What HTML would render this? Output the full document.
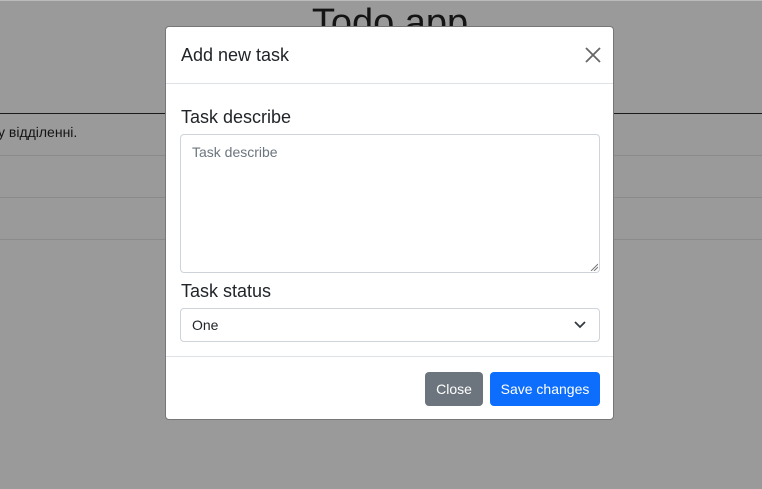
<!DOCTYPE html><html><head><style>
body{margin:0;width:762px;height:489px;overflow:hidden;background:#9a9a9a;font-family:"Liberation Sans",sans-serif;position:relative;color:#111}
.a{position:absolute}
.m{left:165px;top:26px;width:449px;height:394px;background:#fff;border:1px solid #777;border-radius:4px;box-sizing:border-box}
label{position:absolute;font-size:18px;color:#212529}
</style></head><body>
<div class="a" style="left:0;top:0;width:762px;height:1px;background:#bbb"></div>
<div class="a" style="left:0;right:0;top:1px;text-align:center;font-size:38px;color:#141414;line-height:44px;padding-left:18px">Todo app</div>
<div class="a" style="left:0;top:113px;width:762px;height:1px;background:#1a1a1a"></div>
<div class="a" style="left:-2px;top:124px;font-size:14px;color:#141414">у відділенні.</div>
<div class="a" style="left:0;top:155px;width:762px;height:1px;background:#8a8a8a"></div>
<div class="a" style="left:0;top:197px;width:762px;height:1px;background:#8a8a8a"></div>
<div class="a" style="left:0;top:239px;width:762px;height:1px;background:#8a8a8a"></div>
<div class="a m">
 <div class="a" style="left:15px;top:18px;font-size:18px;color:#212529">Add new task</div>
 <svg class="a" style="left:419px;top:20px" width="16" height="16" viewBox="0 0 16 16"><path d="M1 1L15 15M15 1L1 15" stroke="#666" stroke-width="1.8"/></svg>
 <div class="a" style="left:0;top:56px;width:100%;height:1px;background:#dee2e6"></div>
 <label style="left:15px;top:80px">Task describe</label>
 <div class="a" style="left:14px;top:107px;width:420px;height:139px;border:1px solid #ced4da;border-radius:4px;box-sizing:border-box"></div>
 <div class="a" style="left:26px;top:117px;font-size:14px;color:#6c757d">Task describe</div>
 <svg class="a" style="left:424px;top:236px" width="8" height="8"><path d="M1 8L8 1M4 8L8 4" stroke="#777"/></svg>
 <label style="left:15px;top:254px">Task status</label>
 <div class="a" style="left:14px;top:281px;width:420px;height:34px;border:1px solid #ced4da;border-radius:4px;box-sizing:border-box"></div>
 <div class="a" style="left:26px;top:290px;font-size:14px;color:#212529">One</div>
 <svg class="a" style="left:408px;top:294px" width="12" height="8"><path d="M1 1L6 6L11 1" stroke="#343a40" stroke-width="1.8" fill="none"/></svg>
 <div class="a" style="left:0;top:329px;width:100%;height:1px;background:#dee2e6"></div>
 <div class="a" style="left:259px;top:345px;width:58px;height:34px;background:#6c757d;border-radius:4px;color:#fff;font-size:14px;line-height:34px;text-align:center">Close</div>
 <div class="a" style="left:324px;top:345px;width:110px;height:34px;background:#0d6efd;border-radius:4px;color:#fff;font-size:14px;line-height:34px;text-align:center">Save changes</div>
</div>
</body></html>
